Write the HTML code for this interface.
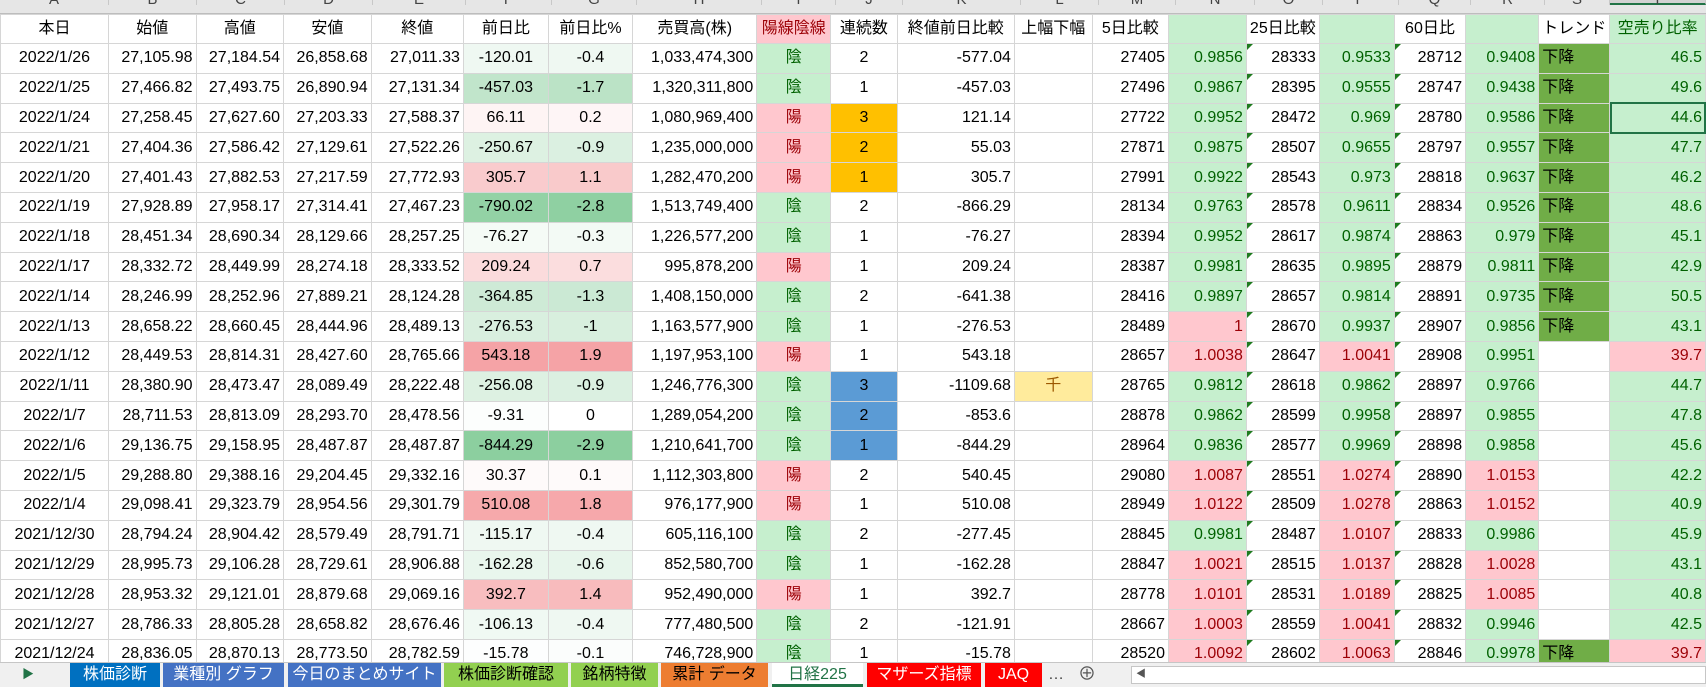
<!DOCTYPE html>
<html><head><meta charset="utf-8"><style>
*{margin:0;padding:0;box-sizing:border-box}
body{width:1706px;height:687px;overflow:hidden;background:#fff;font-family:"Liberation Sans","Noto Sans CJK JP",sans-serif;font-size:16px;color:#000;position:relative}
#hdr{position:absolute;left:0;top:0;height:14px;width:1706px;background:#e6e6e6;border-bottom:1px solid #bdbdbd;overflow:hidden}
#hdr div{position:absolute;top:-9px;height:14px;text-align:center;color:#444;font-size:15px;border-right:1px solid #c8c8c8}
table{position:absolute;left:0;top:14px;border-collapse:collapse;table-layout:fixed}
td{height:29.8px;border:1px solid #d6d6d6;padding:0 3px;white-space:nowrap;overflow:hidden;text-align:right;font-size:16px;line-height:28px}
tr.h td{height:28px;text-align:center}
.c{text-align:center}.l{text-align:left}
.g{background:#c6efce;color:#006100}.r{background:#ffc7ce;color:#9c0006}
.o{background:#ffc000;text-align:center}.b{background:#5b9bd5;text-align:center}
.s{background:#70ad47;text-align:left}
.y{background:#ffeb9c;color:#9c5700;text-align:center}
.t{position:relative}
.t:before{content:"";position:absolute;left:0;top:0;border-top:6px solid #1e7b1e;border-right:6px solid transparent}
#sel{position:absolute;left:1610px;top:102px;width:96px;height:32px;border:2px solid #217346}
#tabs{position:absolute;left:0;top:662px;width:1706px;height:25px;background:#f0f0f0;border-top:1px solid #c6c6c6}
#tabs div{position:absolute;top:0;height:24px;font-size:16px;line-height:23px;text-align:center;font-family:"Liberation Sans","Noto Sans CJK JP",sans-serif}
</style></head><body>
<div id="hdr">
<div style="left:0;width:109px">A</div><div style="left:109px;width:88px">B</div><div style="left:197px;width:88px">C</div><div style="left:285px;width:88px">D</div><div style="left:373px;width:93px">E</div><div style="left:466px;width:86px">F</div><div style="left:552px;width:85px">G</div><div style="left:637px;width:125px">H</div><div style="left:762px;width:74px">I</div><div style="left:836px;width:67px">J</div><div style="left:903px;width:118px">K</div><div style="left:1021px;width:78px">L</div><div style="left:1099px;width:77px">M</div><div style="left:1176px;width:79px">N</div><div style="left:1255px;width:68px">O</div><div style="left:1323px;width:76px">P</div><div style="left:1399px;width:72px">Q</div><div style="left:1471px;width:74px">R</div><div style="left:1545px;width:65px">S</div><div style="left:1610px;width:96px;background:#d2d2d2;border-bottom:2px solid #217346">T</div>
</div>
<table>
<colgroup><col style="width:109px"><col style="width:88px"><col style="width:88px"><col style="width:88px"><col style="width:93px"><col style="width:86px"><col style="width:85px"><col style="width:125px"><col style="width:74px"><col style="width:67px"><col style="width:118px"><col style="width:78px"><col style="width:77px"><col style="width:79px"><col style="width:68px"><col style="width:76px"><col style="width:72px"><col style="width:74px"><col style="width:65px"><col style="width:96px"></colgroup>
<tr class="h"><td>本日</td><td>始値</td><td>高値</td><td>安値</td><td>終値</td><td>前日比</td><td>前日比%</td><td>売買高(株)</td><td class="r">陽線陰線</td><td>連続数</td><td>終値前日比較</td><td>上幅下幅</td><td class="l">5日比較</td><td class="g"></td><td class="l" style="overflow:visible">25日比較</td><td class="g"></td><td class="l">60日比</td><td class="g"></td><td class="l">トレンド</td><td class="g l">空売り比率</td></tr>
<tr><td class="c">2022/1/26</td><td>27,105.98</td><td>27,184.54</td><td>26,858.68</td><td>27,011.33</td><td class="c" style="background:#eff8f2">-120.01</td><td class="c" style="background:#eff8f2">-0.4</td><td>1,033,474,300</td><td class="g c">陰</td><td class="c">2</td><td>-577.04</td><td></td><td>27405</td><td class="g">0.9856</td><td class="t">28333</td><td class="g">0.9533</td><td class="t">28712</td><td class="g">0.9408</td><td class="s">下降</td><td class="g">46.5</td></tr>
<tr><td class="c">2022/1/25</td><td>27,466.82</td><td>27,493.75</td><td>26,890.94</td><td>27,131.34</td><td class="c" style="background:#c1e5cb">-457.03</td><td class="c" style="background:#bbe3c6">-1.7</td><td>1,320,311,800</td><td class="g c">陰</td><td class="c">1</td><td>-457.03</td><td></td><td>27496</td><td class="g">0.9867</td><td class="t">28395</td><td class="g">0.9555</td><td class="t">28747</td><td class="g">0.9438</td><td class="s">下降</td><td class="g">49.6</td></tr>
<tr><td class="c">2022/1/24</td><td>27,258.45</td><td>27,627.60</td><td>27,203.33</td><td>27,588.37</td><td class="c" style="background:#fef4f4">66.11</td><td class="c" style="background:#fef5f6">0.2</td><td>1,080,969,400</td><td class="r c">陽</td><td class="o">3</td><td>121.14</td><td></td><td>27722</td><td class="g">0.9952</td><td class="t">28472</td><td class="g">0.969</td><td class="t">28780</td><td class="g">0.9586</td><td class="s">下降</td><td class="g">44.6</td></tr>
<tr><td class="c">2022/1/21</td><td>27,404.36</td><td>27,586.42</td><td>27,129.61</td><td>27,522.26</td><td class="c" style="background:#ddf1e2">-250.67</td><td class="c" style="background:#dbf0e1">-0.9</td><td>1,235,000,000</td><td class="r c">陽</td><td class="o">2</td><td>55.03</td><td></td><td>27871</td><td class="g">0.9875</td><td class="t">28507</td><td class="g">0.9655</td><td class="t">28797</td><td class="g">0.9557</td><td class="s">下降</td><td class="g">47.7</td></tr>
<tr><td class="c">2022/1/20</td><td>27,401.43</td><td>27,882.53</td><td>27,217.59</td><td>27,772.93</td><td class="c" style="background:#f9cbcd">305.7</td><td class="c" style="background:#f9cacb">1.1</td><td>1,282,470,200</td><td class="r c">陽</td><td class="o">1</td><td>305.7</td><td></td><td>27991</td><td class="g">0.9922</td><td class="t">28543</td><td class="g">0.973</td><td class="t">28818</td><td class="g">0.9637</td><td class="s">下降</td><td class="g">46.2</td></tr>
<tr><td class="c">2022/1/19</td><td>27,928.89</td><td>27,958.17</td><td>27,314.41</td><td>27,467.23</td><td class="c" style="background:#93d2a5">-790.02</td><td class="c" style="background:#8fd0a2">-2.8</td><td>1,513,749,400</td><td class="g c">陰</td><td class="c">2</td><td>-866.29</td><td></td><td>28134</td><td class="g">0.9763</td><td class="t">28578</td><td class="g">0.9611</td><td class="t">28834</td><td class="g">0.9526</td><td class="s">下降</td><td class="g">48.6</td></tr>
<tr><td class="c">2022/1/18</td><td>28,451.34</td><td>28,690.34</td><td>28,129.66</td><td>28,257.25</td><td class="c" style="background:#f5fbf6">-76.27</td><td class="c" style="background:#f3faf5">-0.3</td><td>1,226,577,200</td><td class="g c">陰</td><td class="c">1</td><td>-76.27</td><td></td><td>28394</td><td class="g">0.9952</td><td class="t">28617</td><td class="g">0.9874</td><td class="t">28863</td><td class="g">0.979</td><td class="s">下降</td><td class="g">45.1</td></tr>
<tr><td class="c">2022/1/17</td><td>28,332.72</td><td>28,449.99</td><td>28,274.18</td><td>28,333.52</td><td class="c" style="background:#fbdbdc">209.24</td><td class="c" style="background:#fbddde">0.7</td><td>995,878,200</td><td class="r c">陽</td><td class="c">1</td><td>209.24</td><td></td><td>28387</td><td class="g">0.9981</td><td class="t">28635</td><td class="g">0.9895</td><td class="t">28879</td><td class="g">0.9811</td><td class="s">下降</td><td class="g">42.9</td></tr>
<tr><td class="c">2022/1/14</td><td>28,246.99</td><td>28,252.96</td><td>27,889.21</td><td>28,124.28</td><td class="c" style="background:#ceead6">-364.85</td><td class="c" style="background:#cbe9d4">-1.3</td><td>1,408,150,000</td><td class="g c">陰</td><td class="c">2</td><td>-641.38</td><td></td><td>28416</td><td class="g">0.9897</td><td class="t">28657</td><td class="g">0.9814</td><td class="t">28891</td><td class="g">0.9735</td><td class="s">下降</td><td class="g">50.5</td></tr>
<tr><td class="c">2022/1/13</td><td>28,658.22</td><td>28,660.45</td><td>28,444.96</td><td>28,489.13</td><td class="c" style="background:#d9efdf">-276.53</td><td class="c" style="background:#d8efde">-1</td><td>1,163,577,900</td><td class="g c">陰</td><td class="c">1</td><td>-276.53</td><td></td><td>28489</td><td class="r">1</td><td class="t">28670</td><td class="g">0.9937</td><td class="t">28907</td><td class="g">0.9856</td><td class="s">下降</td><td class="g">43.1</td></tr>
<tr><td class="c">2022/1/12</td><td>28,449.53</td><td>28,814.31</td><td>28,427.60</td><td>28,765.66</td><td class="c" style="background:#f5a3a6">543.18</td><td class="c" style="background:#f5a3a6">1.9</td><td>1,197,953,100</td><td class="r c">陽</td><td class="c">1</td><td>543.18</td><td></td><td>28657</td><td class="r">1.0038</td><td class="t">28647</td><td class="r">1.0041</td><td class="t">28908</td><td class="g">0.9951</td><td></td><td class="r">39.7</td></tr>
<tr><td class="c">2022/1/11</td><td>28,380.90</td><td>28,473.47</td><td>28,089.49</td><td>28,222.48</td><td class="c" style="background:#ddf1e2">-256.08</td><td class="c" style="background:#dbf0e1">-0.9</td><td>1,246,776,300</td><td class="g c">陰</td><td class="b">3</td><td>-1109.68</td><td class="y">千</td><td>28765</td><td class="g">0.9812</td><td class="t">28618</td><td class="g">0.9862</td><td class="t">28897</td><td class="g">0.9766</td><td></td><td class="g">44.7</td></tr>
<tr><td class="c">2022/1/7</td><td>28,711.53</td><td>28,813.09</td><td>28,293.70</td><td>28,478.56</td><td class="c" style="background:#fcfefd">-9.31</td><td class="c">0</td><td>1,289,054,200</td><td class="g c">陰</td><td class="b">2</td><td>-853.6</td><td></td><td>28878</td><td class="g">0.9862</td><td class="t">28599</td><td class="g">0.9958</td><td class="t">28897</td><td class="g">0.9855</td><td></td><td class="g">47.8</td></tr>
<tr><td class="c">2022/1/6</td><td>29,136.75</td><td>29,158.95</td><td>28,487.87</td><td>28,487.87</td><td class="c" style="background:#8ccf9f">-844.29</td><td class="c" style="background:#8ccf9f">-2.9</td><td>1,210,641,700</td><td class="g c">陰</td><td class="b">1</td><td>-844.29</td><td></td><td>28964</td><td class="g">0.9836</td><td class="t">28577</td><td class="g">0.9969</td><td class="t">28898</td><td class="g">0.9858</td><td></td><td class="g">45.6</td></tr>
<tr><td class="c">2022/1/5</td><td>29,288.80</td><td>29,388.16</td><td>29,204.45</td><td>29,332.16</td><td class="c" style="background:#fefafa">30.37</td><td class="c" style="background:#fefafa">0.1</td><td>1,112,303,800</td><td class="r c">陽</td><td class="c">2</td><td>540.45</td><td></td><td>29080</td><td class="r">1.0087</td><td class="t">28551</td><td class="r">1.0274</td><td class="t">28890</td><td class="r">1.0153</td><td></td><td class="g">42.2</td></tr>
<tr><td class="c">2022/1/4</td><td>29,098.41</td><td>29,323.79</td><td>28,954.56</td><td>29,301.79</td><td class="c" style="background:#f6a9ab">510.08</td><td class="c" style="background:#f6a8ab">1.8</td><td>976,177,900</td><td class="r c">陽</td><td class="c">1</td><td>510.08</td><td></td><td>28949</td><td class="r">1.0122</td><td class="t">28509</td><td class="r">1.0278</td><td class="t">28863</td><td class="r">1.0152</td><td></td><td class="g">40.9</td></tr>
<tr><td class="c">2021/12/30</td><td>28,794.24</td><td>28,904.42</td><td>28,579.49</td><td>28,791.71</td><td class="c" style="background:#eff8f2">-115.17</td><td class="c" style="background:#eff8f2">-0.4</td><td>605,116,100</td><td class="g c">陰</td><td class="c">2</td><td>-277.45</td><td></td><td>28845</td><td class="g">0.9981</td><td class="t">28487</td><td class="r">1.0107</td><td class="t">28833</td><td class="g">0.9986</td><td></td><td class="g">45.9</td></tr>
<tr><td class="c">2021/12/29</td><td>28,995.73</td><td>29,106.28</td><td>28,729.61</td><td>28,906.88</td><td class="c" style="background:#e9f6ed">-162.28</td><td class="c" style="background:#e7f5eb">-0.6</td><td>852,580,700</td><td class="g c">陰</td><td class="c">1</td><td>-162.28</td><td></td><td>28847</td><td class="r">1.0021</td><td class="t">28515</td><td class="r">1.0137</td><td class="t">28828</td><td class="r">1.0028</td><td></td><td class="g">43.1</td></tr>
<tr><td class="c">2021/12/28</td><td>28,953.32</td><td>29,121.01</td><td>28,879.68</td><td>29,069.16</td><td class="c" style="background:#f8bdbf">392.7</td><td class="c" style="background:#f8bbbd">1.4</td><td>952,490,000</td><td class="r c">陽</td><td class="c">1</td><td>392.7</td><td></td><td>28778</td><td class="r">1.0101</td><td class="t">28531</td><td class="r">1.0189</td><td class="t">28825</td><td class="r">1.0085</td><td></td><td class="g">40.8</td></tr>
<tr><td class="c">2021/12/27</td><td>28,786.33</td><td>28,805.28</td><td>28,658.82</td><td>28,676.46</td><td class="c" style="background:#f0f9f3">-106.13</td><td class="c" style="background:#eff8f2">-0.4</td><td>777,480,500</td><td class="g c">陰</td><td class="c">2</td><td>-121.91</td><td></td><td>28667</td><td class="r">1.0003</td><td class="t">28559</td><td class="r">1.0041</td><td class="t">28832</td><td class="g">0.9946</td><td></td><td class="g">42.5</td></tr>
<tr><td class="c">2021/12/24</td><td>28,836.05</td><td>28,870.13</td><td>28,773.50</td><td>28,782.59</td><td class="c" style="background:#fdfefe">-15.78</td><td class="c" style="background:#fbfdfc">-0.1</td><td>746,728,900</td><td class="g c">陰</td><td class="c">1</td><td>-15.78</td><td></td><td>28520</td><td class="r">1.0092</td><td class="t">28602</td><td class="r">1.0063</td><td class="t">28846</td><td class="g">0.9978</td><td class="s">下降</td><td class="r">39.7</td></tr>
</table>
<div id="sel"></div>
<div id="tabs">
<div style="left:18px;width:20px;color:#217346;font-size:12px">▶</div>
<div style="left:70px;width:90px;background:#0070c0;color:#fff">株価診断</div>
<div style="left:163px;width:121px;background:#4472c4;color:#fff">業種別 グラフ</div>
<div style="left:288px;width:153px;background:#4472c4;color:#fff">今日のまとめサイト</div>
<div style="left:444px;width:124px;background:#92d050;color:#000">株価診断確認</div>
<div style="left:571px;width:87px;background:#92d050;color:#000">銘柄特徴</div>
<div style="left:661px;width:107px;background:#ed7d31;color:#000">累計 データ</div>
<div style="left:772px;width:91px;background:#fff;color:#217346;border-bottom:3px solid #217346">日経225</div>
<div style="left:867px;width:114px;background:#ff0000;color:#fff">マザーズ指標</div>
<div style="left:985px;width:57px;background:#ff0000;color:#fff">JAQ</div>
<div style="left:1046px;width:20px;color:#444">…</div>
<div style="left:1076px;width:22px;color:#555;font-size:18px">⊕</div>
<div style="left:1131px;width:575px;top:3px;height:18px;background:#fff;border:1px solid #c6c6c6;text-align:left;padding-left:4px;font-size:10px;line-height:16px;color:#555">◀</div>
</div>
</body></html>
